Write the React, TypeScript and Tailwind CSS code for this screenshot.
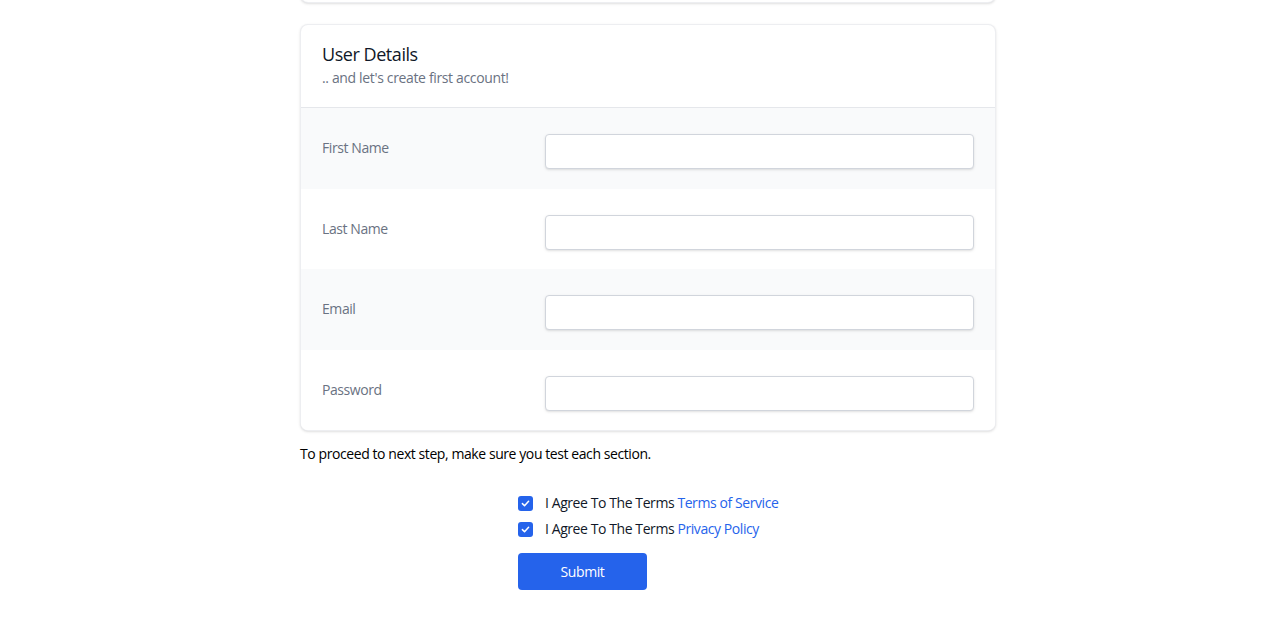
import React from "react";

function Check() {
  return (
    <span className="flex h-[15px] w-[15px] shrink-0 items-center justify-center rounded-[3px] bg-[#2563eb]">
      <svg viewBox="0 0 16 16" className="h-[11px] w-[11px]" fill="none">
        <path d="M3.5 8.2 6.6 11.2 12.5 4.8" stroke="white" strokeWidth="2.2" strokeLinecap="round" strokeLinejoin="round" />
      </svg>
    </span>
  );
}

const fields = ["First Name", "Last Name", "Email", "Password"];

export default function App() {
  return (
    <div className="min-h-screen bg-white font-['Open_Sans',sans-serif] tracking-[-0.42px]">
      <div className="ml-[300px] flex w-[696px] flex-col">
        <div className="-mt-[37px] h-[40px] rounded-lg border border-gray-200/70 bg-white shadow-sm" />
        <div className="mt-[21px] overflow-hidden rounded-lg border border-gray-200/70 bg-white shadow-sm">
          <div className="border-b border-gray-200 px-[21px] pb-[19px] pt-[15px]">
            <h3 className="text-lg font-normal leading-7 tracking-[-0.45px] text-gray-900">User Details</h3>
            <p className="text-sm leading-5 tracking-[-0.35px] text-gray-500">.. and let's create first account!</p>
          </div>
          {fields.map((f, i) => (
            <div
              key={f}
              className={`grid grid-cols-3 gap-4 px-[21px] pb-[19.5px] pt-[26px] ${i % 2 === 0 ? "bg-gray-50" : "bg-white"}`}
            >
              <label className="mt-[4px] text-sm leading-5 text-gray-500">{f}</label>
              <input
                type={f === "Password" ? "password" : "text"}
                className="col-span-2 h-[35px] rounded-[4px] border border-gray-300 bg-white px-3 text-sm shadow-sm outline-none"
              />
            </div>
          ))}
        </div>
        <p className="mt-[13px] text-sm leading-5 text-black">
          To proceed to next step, make sure you test each section.
        </p>
        <div className="ml-[218px] mt-[29px] flex flex-col">
          <div className="flex h-[26px] items-center gap-3 pb-[6px] text-sm leading-5 text-gray-900">
            <Check />
            <span>
              I Agree To The Terms <a className="text-[#2563eb]">Terms of Service</a>
            </span>
          </div>
          <div className="flex h-[20px] items-center gap-3 text-sm leading-5 text-gray-900">
            <Check />
            <span>
              I Agree To The Terms <a className="text-[#2563eb]">Privacy Policy</a>
            </span>
          </div>
          <button className="mt-[14px] h-[37px] w-[129px] rounded-[4px] bg-[#2563eb] text-sm font-medium text-white">
            Submit
          </button>
        </div>
      </div>
    </div>
  );
}
